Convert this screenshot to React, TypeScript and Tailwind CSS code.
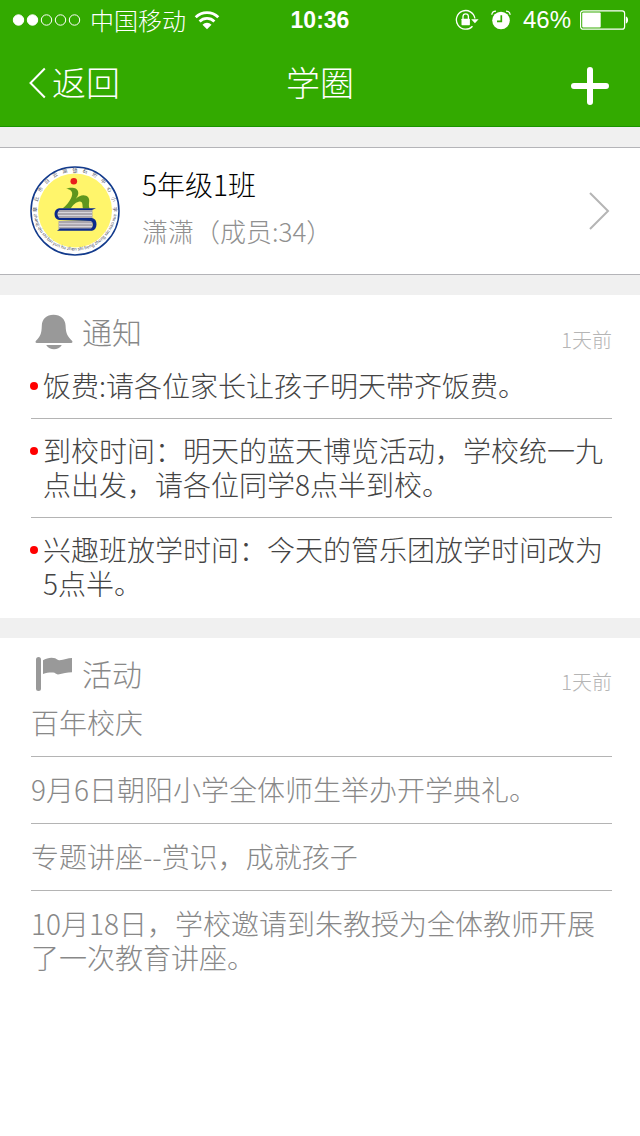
import React from 'react';

const notices = [
  '饭费:请各位家长让孩子明天带齐饭费。',
  '到校时间：明天的蓝天博览活动，学校统一九点出发，请各位同学8点半到校。',
  '兴趣班放学时间：今天的管乐团放学时间改为5点半。',
];

const activities = [
  '百年校庆',
  '9月6日朝阳小学全体师生举办开学典礼。',
  '专题讲座--赏识，成就孩子',
  '10月18日，学校邀请到朱教授为全体教师开展了一次教育讲座。',
];

const schoolName = [...'章丘市白云湖镇石珩中心小学'];

function StatusBar() {
  return (
    <div className="grid h-10 grid-cols-[1fr_auto_1fr] items-center pr-3 pl-3">
      <div className="flex items-center">
        <svg width="70" height="14" viewBox="0 0 70 14" aria-hidden="true">
          <g fill="#fff" stroke="#fff">
            <circle cx="6.500" cy="7" r="5.2" />
            <circle cx="20.500" cy="7" r="5.2" />
          </g>
          <g fill="none" stroke="#fff">
            <circle cx="34.500" cy="7" r="5.2" />
            <circle cx="48.500" cy="7" r="5.2" />
            <circle cx="62.500" cy="7" r="5.2" />
          </g>
        </svg>
        <span className="ml-2 text-2xl leading-10">中国移动</span>
        <svg className="ml-2" width="26" height="20" viewBox="0 0 26 20" aria-hidden="true">
          <g fill="none" stroke="#fff" strokeWidth="2.8">
            <path d="M1.700 7.200a16 16 0 0 1 22.600 0" />
            <path d="M5.600 11.400a10.500 10.500 0 0 1 14.800 0" />
          </g>
          <path d="M8.500 14.700a6.400 6.400 0 0 1 9 0L13 19.200z" fill="#fff" />
        </svg>
      </div>
      <time className="font-['Liberation_Sans',sans-serif] text-[23px] leading-10 font-bold">10:36</time>
      <div className="flex items-center justify-end">
        <svg width="24" height="22" viewBox="0 0 24 22" aria-hidden="true">
          <path d="M19.900 9.500A9.300 9.300 0 1 0 17.500 17.200" fill="none" stroke="#fff" strokeWidth="1.300" />
          <path d="M16.200 10.200h7.400l-3.700 4z" fill="#fff" />
          <path d="M8 10V7.500a2.700 2.700 0 0 1 5.400 0V10" fill="none" stroke="#fff" strokeWidth="1.300" />
          <rect x="6.500" y="9.700" width="8.400" height="6.500" rx=".6" fill="#fff" />
        </svg>
        <svg className="ml-3" width="20" height="20" viewBox="0 0 20 20" aria-hidden="true">
          <circle cx="10" cy="10.500" r="8.800" fill="#fff" />
          <path d="M.8 4.800C1 2.400 2.700 1.100 5 1.100M19.200 4.800C19 2.400 17.300 1.100 15 1.100" fill="none" stroke="#fff" strokeWidth="1.300" />
          <path d="M10.300 5.200v6.200H6" fill="none" stroke="#3a0" strokeWidth="1.700" />
        </svg>
        <span className="ml-3 font-['Liberation_Sans',sans-serif] text-2xl leading-10">46%</span>
        <svg className="ml-2" width="49" height="20" viewBox="0 0 49 20" aria-hidden="true">
          <rect x="1.600" y=".8" width="44" height="18.400" rx="2.500" fill="none" stroke="#fff" strokeWidth="1.200" />
          <rect x="3.200" y="2.600" width="18.500" height="14.800" rx="1" fill="#fff" />
          <path d="M46.800 6.500c3 .5 3 6.500 0 7z" fill="#fff" />
        </svg>
      </div>
    </div>
  );
}

function NavBar() {
  return (
    <nav className="grid h-[86px] grid-cols-[1fr_auto_1fr] items-center px-[29px] text-[34px] leading-none">
      <button type="button" className="flex items-center justify-self-start">
        <svg width="17" height="32" viewBox="0 0 17 32" aria-hidden="true">
          <path d="M15.800 1.500 1.500 16l14.300 14.500" fill="none" stroke="#fff" strokeWidth="2" />
        </svg>
        <span className="ml-[6px] pb-[3px]">返回</span>
      </button>
      <h1 className="pb-[2px]">学圈</h1>
      <button type="button" aria-label="添加" className="justify-self-end pt-[6px]">
        <svg width="42" height="40" viewBox="0 0 42 40" aria-hidden="true">
          <path d="M21 4v32M5 20h32" stroke="#fff" strokeWidth="6" strokeLinecap="round" />
        </svg>
      </button>
    </nav>
  );
}

function SchoolBadge() {
  return (
    <svg className="shrink-0" width="90" height="90" viewBox="0 0 90 90" role="img" aria-label="校徽">
      <defs>
        <path id="ring-top" d="M7.200 50A38.300 38.300 0 1 1 82.800 50" />
        <path id="ring-bottom" d="M3.600 47A41.600 41.600 0 0 0 86.400 47" />
      </defs>
      <circle cx="45" cy="45" r="44" fill="#fff" stroke="#123a8c" strokeWidth="1.500" />
      <circle cx="45" cy="44.500" r="37" fill="#fff56b" />
      {schoolName.map((char, i) => (
        <text key={i} fontSize="5" fontWeight="400" fill="#4b5060" textAnchor="middle">
          <textPath href="#ring-top" startOffset={`${5 + i * 7.500}%`}>{char}</textPath>
        </text>
      ))}
      <text fontSize="4.500" fontWeight="400" fill="#4b5060" textAnchor="middle">
        <textPath href="#ring-bottom" startOffset="50%">zhang qiu shi bai yun hu zhen shi heng zhong xin xiao xue</textPath>
      </text>
      <circle cx="43.800" cy="15.300" r="3.300" fill="#e8201c" />
      <path d="M36.200 23C38 21.800 40.500 21.500 42.700 21.700C46.200 22 48.500 24.200 48.300 27.200C48.200 29.500 47 31.200 45.800 32.800C48.300 30.500 51 29.200 53.500 29.300C57.500 29.500 59.400 31.800 59.200 35C59 37.500 58.500 40 59.600 42.500H53C52.200 40.500 53 37.800 51.700 36.200C50 34.800 47 36 44.800 37.800C43 39.200 41.800 40.700 40.700 42.500H32.500C36.200 39.600 39.200 36 41 32.300C42.300 29.300 42.800 27 41.200 25C40 23.500 38.300 23 36.200 23z" fill="#5f961d" />
      <path d="M28 44h34.500v8.500H28zM28.500 55h34v8.300h-34z" fill="#aaa6ad" />
      <path d="M28 46.500h34M28 49.500h34M29 57.700h33M29 60.500h33" stroke="#d8d6dc" strokeWidth="1" />
      <path d="M66 42.300 62 44H29.500C27 45.500 27 50.500 29.500 52H62c6 .5 6 12 0 12.700H27L30 62.500h31C63.500 61 63.500 56.500 61 55L29 54c-6-.5-6-11.200 0-11.700z" fill="#0b2a8c" />
    </svg>
  );
}

function BellIcon() {
  return (
    <svg width="38" height="36" viewBox="0 0 38 36" fill="#999" aria-hidden="true">
      <path d="M18.500.8C11.500.8 7 5.200 6.800 11.700c-.2 8-1.600 11-5.800 15-.9 1-.5 2.300.8 2.300h34.400c1.300 0 1.700-1.300.8-2.300-4.200-4-6.200-7-6.400-15C30.400 5.200 25.500.8 18.500.8z" />
      <path d="M11.200 31h15.600c-3.600 5.800-12 5.800-15.600 0z" />
    </svg>
  );
}

function FlagIcon() {
  return (
    <svg width="38" height="36" viewBox="0 0 38 36" fill="#999" aria-hidden="true">
      <rect x="1" y="1" width="5" height="34" rx="2.500" />
      <path d="M8 4.300c3.800-2.800 9.400-3.200 12.200-2 2 1 2.300 2 4.300 1.900 4.700-.2 8.300-2.200 12.500-2.200v14.300c-5 0-9 1.500-14 2.200-2 .1-2.700-1.800-4.800-1.900-4.200-.1-6.700.2-10.200 1.400z" />
    </svg>
  );
}

function SectionHeading({ icon, title, time }: { icon: React.ReactNode; title: string; time: string }) {
  return (
    <header className="flex items-center pl-1">
      {icon}
      <h2 className="ml-[9px] pb-[2px] text-[30px] leading-[34px] text-[#888]">{title}</h2>
      <time className="ml-auto pt-4 text-xl leading-5 text-[#b5b5b5]">{time}</time>
    </header>
  );
}

export default function App() {
  return (
    <div className="flex min-h-screen flex-col bg-[#f0f0f0] font-['Noto_Sans_CJK_SC',sans-serif] font-light">
      <header className="border-b border-[#1a9400] bg-[#3a0] text-white">
        <StatusBar />
        <NavBar />
      </header>

      <a href="#class" className="mt-5 flex items-center border-y border-[#b4b4b8] bg-white py-[18px] pr-[30px] pl-[30px]">
        <SchoolBadge />
        <div className="ml-[22px] grow pb-[7px]">
          <h2 className="text-[28px] leading-9 text-black">5年级1班</h2>
          <p className="pt-[11px] text-[26px] leading-9 text-[#909090]">潇潇（成员:34）</p>
        </div>
        <svg width="21" height="38" viewBox="0 0 21 38" aria-hidden="true">
          <path d="m1 1 18 18L1 37" fill="none" stroke="#b5b5b5" strokeWidth="2" />
        </svg>
      </a>

      <section className="mt-5 bg-white pt-[19px] pr-7 pb-[2px] pl-[31px]">
        <SectionHeading icon={<BellIcon />} title="通知" time="1天前" />
        <ul className="mt-1 divide-y divide-[#b4b4b4] text-[28px] leading-[34px] text-[#444]">
          {notices.map((text) => (
            <li key={text} className="flex pt-[14px] pb-4">
              <span className="mt-[14px] mr-[5px] -ml-px size-2 shrink-0 rounded-full bg-[#f00]" />
              <p className="-mr-1">{text}</p>
            </li>
          ))}
        </ul>
      </section>

      <section className="mt-5 grow bg-white pt-[18px] pr-7 pb-4 pl-[31px]">
        <SectionHeading icon={<FlagIcon />} title="活动" time="1天前" />
        <ul className="-mt-[2px] divide-y divide-[#b4b4b4] text-[28px] leading-[34px] text-[#888]">
          {activities.map((text) => (
            <li key={text} className="pt-[15px] pb-[17px]">{text}</li>
          ))}
        </ul>
      </section>
    </div>
  );
}
